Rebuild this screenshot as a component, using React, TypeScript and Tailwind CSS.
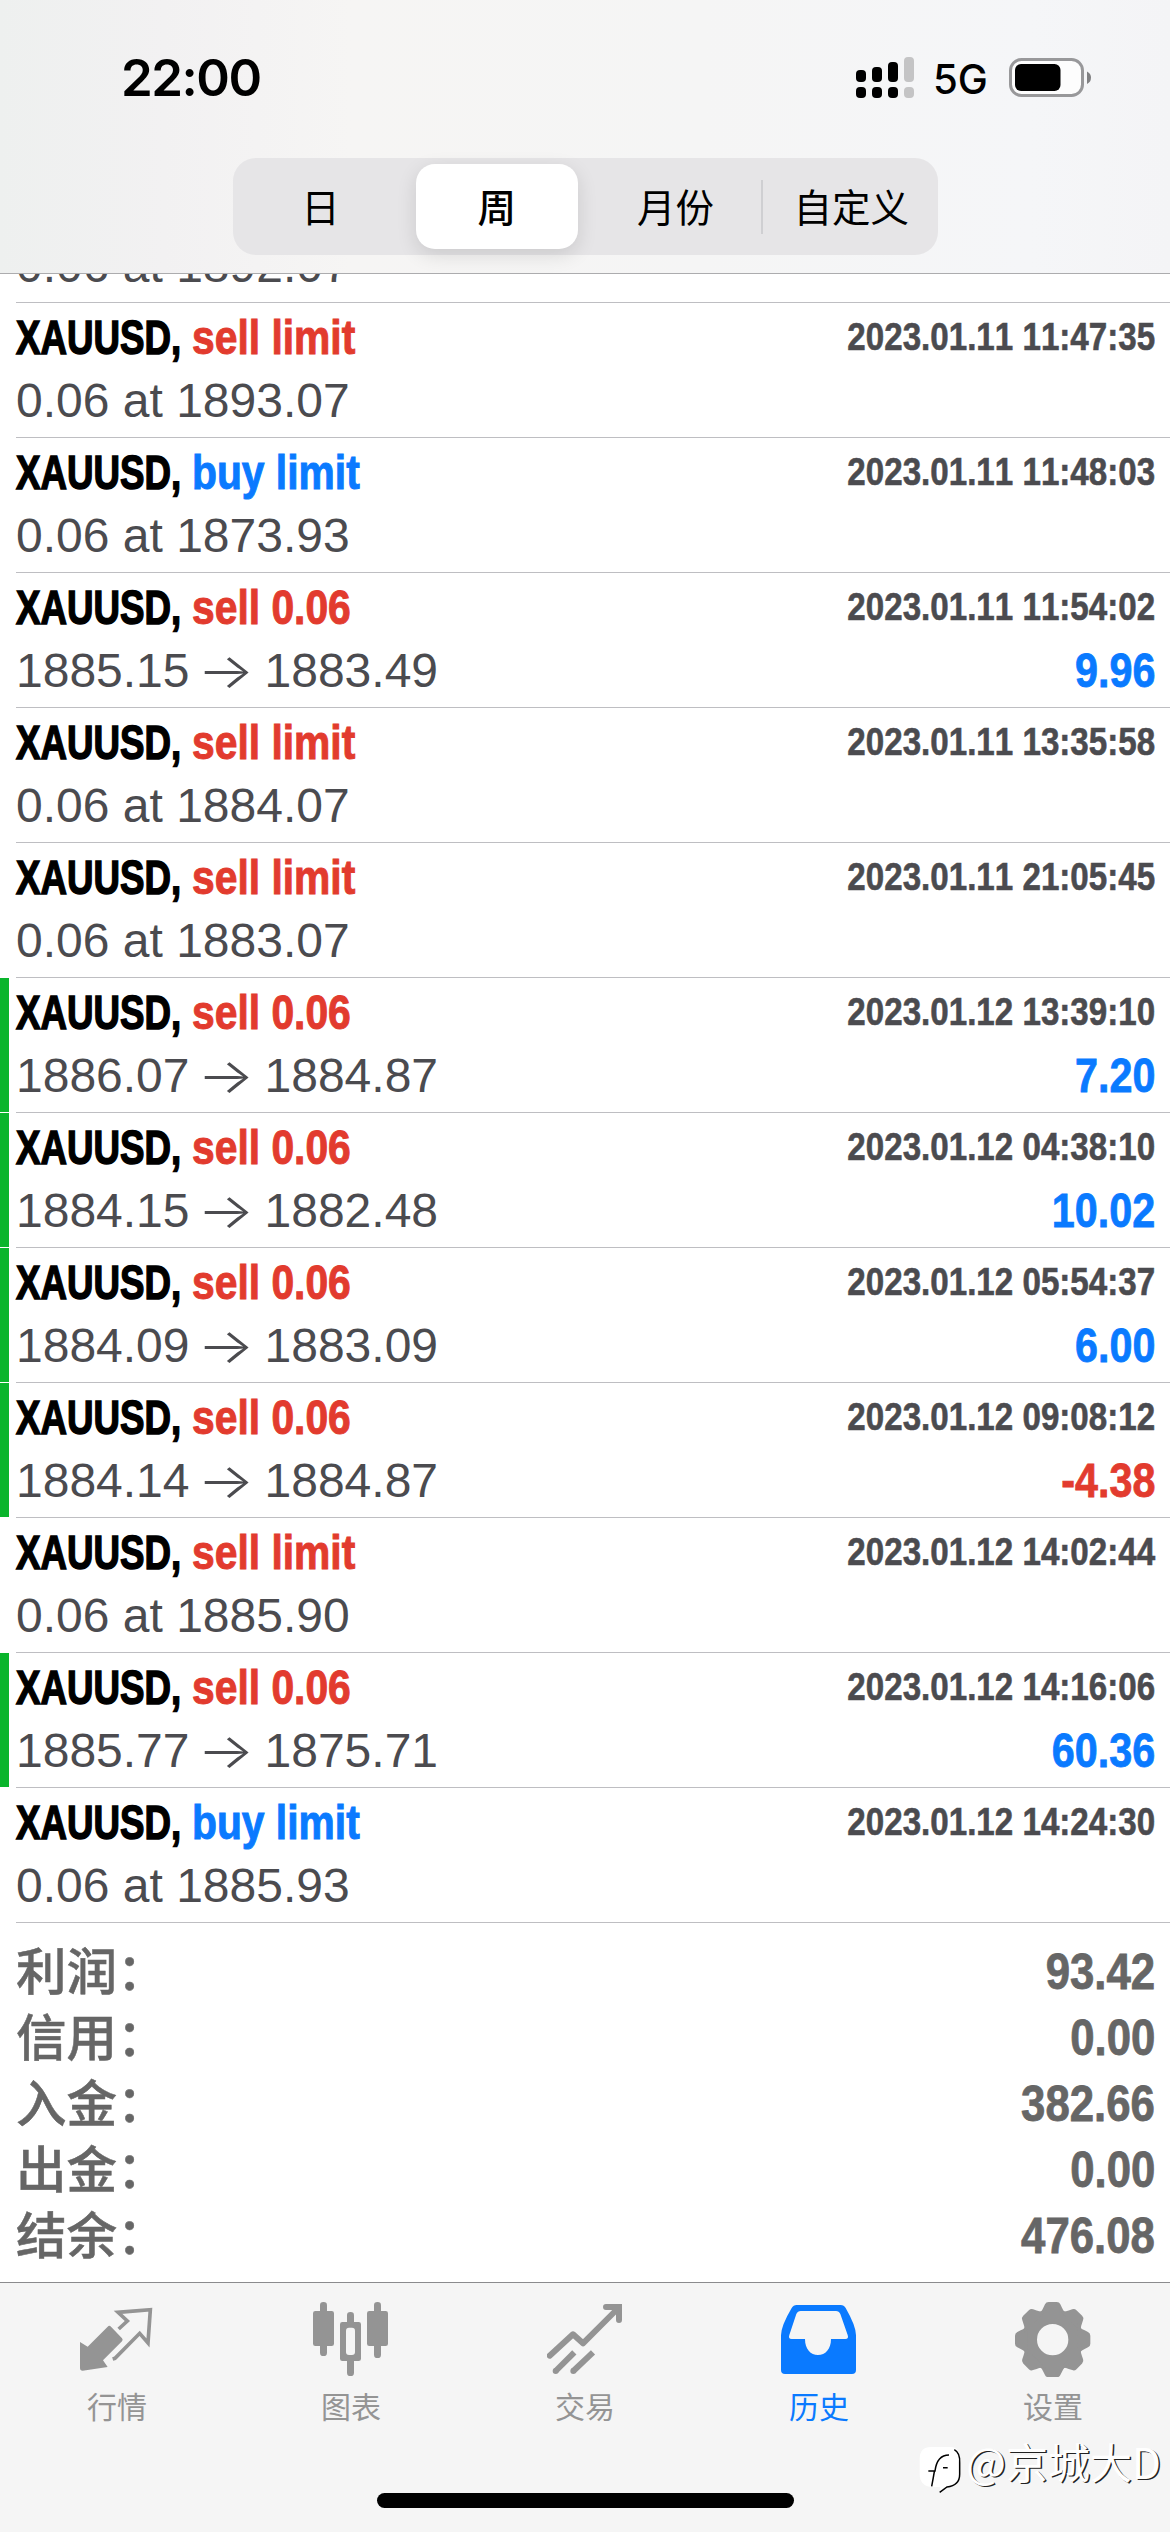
import type { ReactNode } from "react";
import clsx from "clsx";

type Deal = {
  kind: "sell" | "buy";
  label: string;
  time: string;
  from: string;
  to?: string;
  profit?: string;
  marked?: boolean;
};

const deals: Deal[] = [
  { kind: "sell", label: "sell limit", time: "2023.01.11 11:47:35", from: "0.06 at 1893.07" },
  { kind: "buy", label: "buy limit", time: "2023.01.11 11:48:03", from: "0.06 at 1873.93" },
  { kind: "sell", label: "sell 0.06", time: "2023.01.11 11:54:02", from: "1885.15", to: "1883.49", profit: "9.96" },
  { kind: "sell", label: "sell limit", time: "2023.01.11 13:35:58", from: "0.06 at 1884.07" },
  { kind: "sell", label: "sell limit", time: "2023.01.11 21:05:45", from: "0.06 at 1883.07" },
  { kind: "sell", label: "sell 0.06", time: "2023.01.12 13:39:10", from: "1886.07", to: "1884.87", profit: "7.20", marked: true },
  { kind: "sell", label: "sell 0.06", time: "2023.01.12 04:38:10", from: "1884.15", to: "1882.48", profit: "10.02", marked: true },
  { kind: "sell", label: "sell 0.06", time: "2023.01.12 05:54:37", from: "1884.09", to: "1883.09", profit: "6.00", marked: true },
  { kind: "sell", label: "sell 0.06", time: "2023.01.12 09:08:12", from: "1884.14", to: "1884.87", profit: "-4.38", marked: true },
  { kind: "sell", label: "sell limit", time: "2023.01.12 14:02:44", from: "0.06 at 1885.90" },
  { kind: "sell", label: "sell 0.06", time: "2023.01.12 14:16:06", from: "1885.77", to: "1875.71", profit: "60.36", marked: true },
  { kind: "buy", label: "buy limit", time: "2023.01.12 14:24:30", from: "0.06 at 1885.93" },
];

const totals = [
  { label: "利润：", value: "93.42" },
  { label: "信用：", value: "0.00" },
  { label: "入金：", value: "382.66" },
  { label: "出金：", value: "0.00" },
  { label: "结余：", value: "476.08" },
];

const CJK = "font-['Noto_Sans_CJK_SC',sans-serif]";
const SANS = "font-['Liberation_Sans',Arial,sans-serif] [font-kerning:none]";

function StatusBar() {
  return (
    <div className="flex h-[158px] items-start justify-between pt-[48px] pr-[79px] pl-[121px]">
      <span className="font-['Inter',sans-serif] text-[51px] leading-[60px] font-semibold tracking-[-1.5px] text-black">
        22:00
      </span>
      <div className="flex items-start">
        <svg width="58" height="42" viewBox="0 0 58 42" className="mt-[9px]">
          <g fill="#000">
            <rect x="0" y="13" width="10" height="12" rx="4" />
            <rect x="16" y="10" width="10" height="15" rx="4" />
            <rect x="32" y="5" width="10" height="20" rx="4" />
            <rect x="0" y="30" width="10" height="11" rx="4" />
            <rect x="16" y="30" width="10" height="11" rx="4" />
            <rect x="32" y="30" width="10" height="11" rx="4" />
          </g>
          <g fill="#c4c4c5">
            <rect x="48" y="0" width="10" height="25" rx="4" />
            <rect x="48" y="30" width="10" height="11" rx="4" />
          </g>
        </svg>
        <div className="ml-[19px] w-[76px]">
          <span className="inline-block origin-left scale-x-[0.98] font-['Inter',sans-serif] text-[41px] leading-[62px] font-medium text-black">
            5G
          </span>
        </div>
        <svg width="82" height="40" viewBox="0 0 82 40" className="mt-[10px]">
          <rect x="1.5" y="1.5" width="72" height="36" rx="11" fill="#fdfdfd" stroke="#98989a" strokeWidth="3" />
          <rect x="6" y="6" width="45.5" height="27" rx="6" fill="#000" />
          <path d="M78 13.5 Q82 15.5 82 19.5 Q82 24 78 26 Z" fill="#808082" />
        </svg>
      </div>
    </div>
  );
}

function PeriodPicker() {
  return (
    <div
      className={clsx(
        "mx-auto grid h-[97px] w-[705px] grid-cols-4 items-center rounded-[23px] bg-[#e6e5e7] text-center text-[38.5px] leading-[60px] text-black",
        CJK
      )}
    >
      <span className="pb-[4px]">日</span>
      <span className="mx-[7px] flex h-[85px] items-center justify-center rounded-[19px] bg-white pb-[4px] font-medium shadow-[0_6px_20px_rgba(0,0,0,0.12)]">
        周
      </span>
      <span className="pb-[4px] pl-[5px]">月份</span>
      <span className="flex h-[54px] items-center justify-center border-l-2 border-[#cfcfd2] pb-[4px] pl-[2px]">
        自定义
      </span>
    </div>
  );
}

function DealRow({ deal }: { deal: Deal }) {
  const color = deal.kind === "sell" ? "text-[#e23b2e]" : "text-[#0a7aff]";
  return (
    <div className="flex h-[135px]">
      <div className={clsx("h-[134px] w-[9px]", deal.marked && "bg-[#0ab52c]")} />
      <div className={clsx("ml-[7px] flex flex-1 justify-between border-b border-[#bebec2] pr-[15px]", SANS)}>
        <div>
          <div className="flex h-[68px] text-[48px] leading-[69px] font-bold whitespace-nowrap">
            <div className="w-[176px] text-black">
              <span className="inline-block origin-left scale-x-[0.765] [-webkit-text-stroke:1.5px_currentColor]">
                XAUUSD,
              </span>
            </div>
            <span className={clsx("inline-block origin-left scale-x-[0.85] [-webkit-text-stroke:1px_currentColor]", color)}>
              {deal.label}
            </span>
          </div>
          <div className="flex h-[60px] text-[48px] leading-[60px] whitespace-nowrap text-[#4b4b4f]">
            {deal.from}
            {deal.to && (
              <>
                <span className="flex w-[75px] justify-center pr-[3px] font-['Inter',sans-serif] font-light">
                  <span className="inline-block scale-x-[1.25]">→</span>
                </span>
                {deal.to}
              </>
            )}
          </div>
        </div>
        <div className="flex flex-col items-end font-bold whitespace-nowrap">
          <span className="h-[68px] origin-right scale-x-[0.85] text-[39px] leading-[68px] text-[#4b4b4f] [-webkit-text-stroke:0.6px_currentColor]">
            {deal.time}
          </span>
          {deal.profit && (
            <span
              className={clsx(
                "origin-right scale-x-[0.86] text-[48px] leading-[60px] [-webkit-text-stroke:0.8px_currentColor]",
                deal.profit.startsWith("-") ? "text-[#e23b2e]" : "text-[#0a7aff]"
              )}
            >
              {deal.profit}
            </span>
          )}
        </div>
      </div>
    </div>
  );
}

function Tab({ label, active, viewBox, children }: { label: string; active?: boolean; viewBox: string; children: ReactNode }) {
  return (
    <div className={clsx("flex flex-1 flex-col items-center pt-[18px]", active ? "text-[#0a7aff]" : "text-[#949494]")}>
      <svg width="76" height="76" viewBox={viewBox} fill="currentColor">
        {children}
      </svg>
      <span className={clsx("mt-[8px] text-[30px] leading-[40px]", CJK)}>{label}</span>
    </div>
  );
}

function TabBar() {
  return (
    <div className="flex h-[193px]">
      <Tab label="行情" viewBox="117 93 228 228">
        <path d="M120 216 L143 230 L203 170 Q208 165 213 170 L246 205 Q250 210 246 214 L189 271 L203 291 L128 302 Q120 302 120 294 Z" />
        <path
          d="M236 177 L262 153 L234 127 L331 119 L324 219 L299 190 L225 265 L218 267"
          fill="none"
          stroke="currentColor"
          strokeWidth="11"
        />
      </Tab>
      <Tab label="图表" viewBox="819 93 228 228">
        <rect x="840" y="96" width="21" height="162" rx="10" />
        <rect x="819" y="123" width="63" height="105" rx="7" />
        <rect x="1002" y="96" width="21" height="168" rx="10" />
        <rect x="981" y="123" width="63" height="105" rx="7" />
        <rect x="921" y="126" width="21" height="192" rx="10" />
        <rect x="900" y="156" width="63" height="117" rx="7" />
        <rect x="918" y="173" width="27" height="82" rx="9" fill="#f5f5f5" />
      </Tab>
      <Tab label="交易" viewBox="141 93 228 228">
        <g fill="none" stroke="currentColor" strokeWidth="18" strokeLinejoin="round">
          <path d="M149 257 L219 193 L249 220 L352 117" strokeLinecap="round" />
          <path d="M318 111 H357 V150" strokeLinecap="round" strokeLinejoin="miter" />
          <path d="M223 247 L167 303" />
          <path d="M279 247 L220 303" />
        </g>
        <circle cx="167" cy="303" r="9" />
        <circle cx="220" cy="303" r="9" />
      </Tab>
      <Tab label="历史" active viewBox="843 93 228 228">
        <path
          fillRule="evenodd"
          d="M890 105 H1022 Q1032 105 1037 114 Q1068 168 1068 196 V300 Q1068 312 1056 312 H855 Q843 312 843 300 V196 Q843 168 875 114 Q880 105 890 105 Z M902 123 Q893 123 889 132 L868 195 Q864 207 875 207 H915 C915 238 932 255 954 255 C976 255 993 238 993 207 H1036 Q1047 207 1043 195 L1021 132 Q1017 123 1008 123 Z"
        />
      </Tab>
      <Tab label="设置" viewBox="435 93 228 228">
        <circle cx="548" cy="209" r="69" fill="none" stroke="currentColor" strokeWidth="44" />
        {[0, 45, 90, 135, 180, 225, 270, 315].map((angle) => (
          <path
            key={angle}
            d="M500 134 Q514 128 520 113 L525 103 Q528 96 536 96 H560 Q568 96 571 103 L576 113 Q582 128 596 134 Z"
            transform={`rotate(${angle} 548 209)`}
          />
        ))}
      </Tab>
    </div>
  );
}

function Watermark() {
  return (
    <div className="absolute top-[2438px] right-[9px] flex items-start">
      <svg width="46" height="52" viewBox="0 0 138 156" className="mt-[7px] mr-[1px]">
        <path d="M36 6 H94 Q122 6 122 40 V84 Q122 122 88 126 L62 142 L64 126 H36 Q2 122 2 88 V42 Q2 6 36 6 Z" fill="#fff" />
        <g fill="none" stroke="#000">
          <path d="M106 14 Q124 24 122 54 V88 Q122 122 84 126 L62 142" strokeWidth="4.5" />
          <path d="M28 78 H48 Q54 30 90 30 M46 80 Q42 104 38 124 M72 68 H86" strokeWidth="4.5" />
        </g>
      </svg>
      <span
        className={clsx(
          "text-[42px] leading-[46px] font-normal text-white [text-shadow:1.5px_1px_0_#222]",
          CJK
        )}
      >
        @京城大D
      </span>
    </div>
  );
}

export default function App() {
  return (
    <div className="relative flex h-[2532px] w-[1170px] flex-col overflow-hidden bg-white">
      <header className="h-[274px] shrink-0 border-b border-[#acacae] bg-[linear-gradient(90deg,#eef0ef_0%,#f2f1f2_14%,#f6f5f4_30%,#f5f5f5_60%,#f5f6f8_88%,#f4f4f6_100%)]">
        <StatusBar />
        <PeriodPicker />
      </header>

      {/* row scrolled half under the header */}
      <div
        className={clsx(
          "ml-[16px] flex h-[29px] shrink-0 items-end overflow-hidden border-b border-[#bebec2] pb-[6px] text-[48px] leading-[60px] text-[#4b4b4f]",
          SANS
        )}
      >
        0.06 at 1892.07
      </div>

      {deals.map((deal) => (
        <DealRow key={deal.time} deal={deal} />
      ))}

      <div className="flex h-[359px] flex-col pt-[16px] pr-[15px] pl-[16px] text-[#666]">
        {totals.map(({ label, value }) => (
          <div key={label} className="flex h-[66px] justify-between">
            <span className={clsx("text-[50.5px] leading-[58px] font-medium [-webkit-text-stroke:0.5px_currentColor]", CJK)}>
              {label}
            </span>
            <span
              className={clsx(
                "origin-right scale-x-[0.875] text-[50px] leading-[66px] font-bold [-webkit-text-stroke:0.8px_currentColor]",
                SANS
              )}
            >
              {value}
            </span>
          </div>
        ))}
      </div>

      <footer className="h-[250px] shrink-0 border-t border-[#8b8b8d] bg-[#f5f5f5]">
        <TabBar />
        <div className="mx-auto mt-[17px] h-[15px] w-[417px] rounded-full bg-black" />
      </footer>

      <Watermark />
    </div>
  );
}
